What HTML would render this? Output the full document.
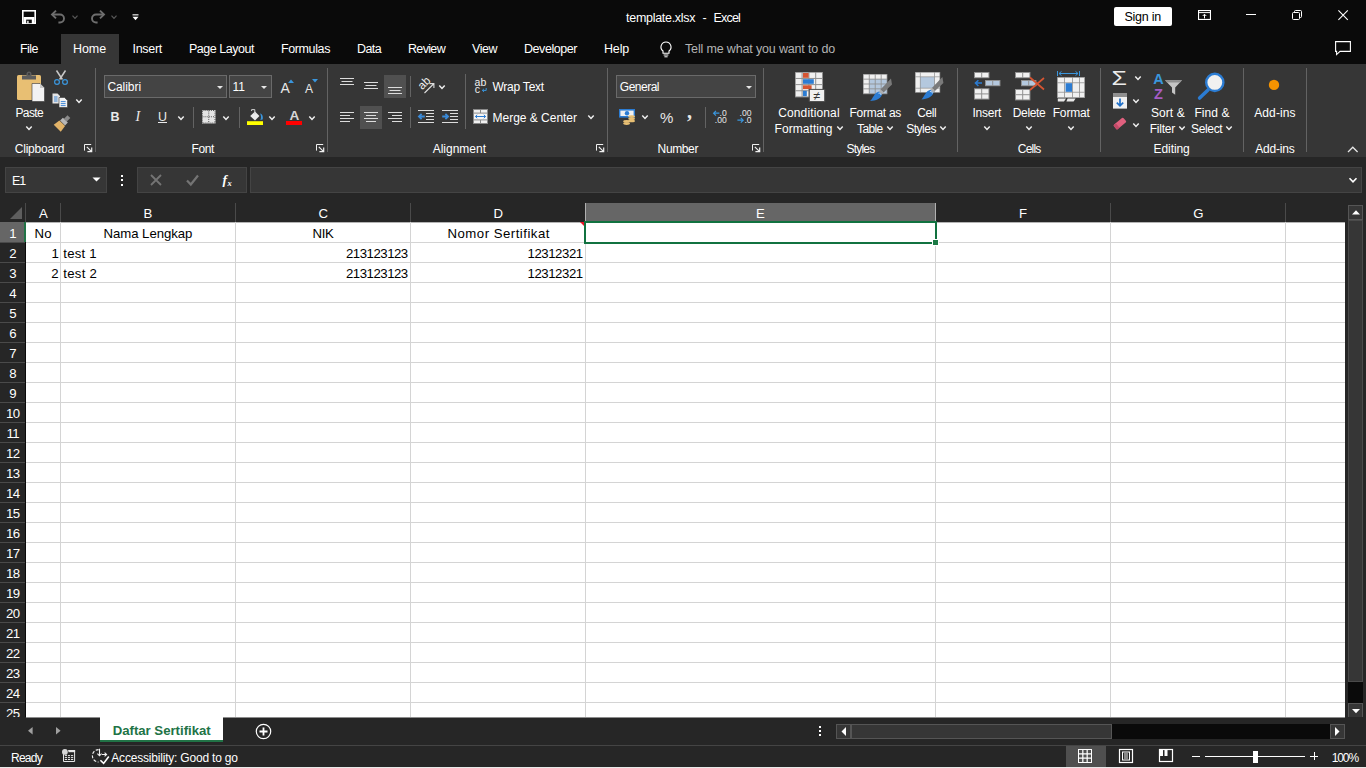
<!DOCTYPE html>
<html lang="en"><head><meta charset="utf-8"><title>template.xlsx - Excel</title>
<style>
html,body{margin:0;padding:0}
body{width:1366px;height:768px;overflow:hidden;background:#0a0a0a;position:relative;font-family:"Liberation Sans",sans-serif;color:#fff}
.b{position:absolute;display:block}
.t{position:absolute;display:block;white-space:pre;height:16px;line-height:16px;color:#fff}
svg{overflow:visible}
</style></head>
<body>
<svg class="b" style="left:22px;top:10px;" width="14" height="14" viewBox="0 0 14 14"><rect x="0.8" y="0.8" width="12.4" height="12.4" fill="none" stroke="#fff" stroke-width="1.6"/><rect x="1.5" y="7" width="11" height="6" fill="#fff"/><rect x="4.2" y="9.6" width="5.6" height="3.6" fill="#0a0a0a"/><rect x="5.2" y="10.8" width="1.4" height="2.6" fill="#fff"/></svg>
<svg class="b" style="left:50px;top:9px;" width="18" height="16" viewBox="0 0 18 16"><path d="M2.4 5.5H10A4 4 0 0 1 10 13.5H8.4" fill="none" stroke="#6e6e6e" stroke-width="1.9"/><path d="M6 1.6L2 5.5L6 9.4" fill="none" stroke="#6e6e6e" stroke-width="1.9"/></svg>
<svg class="b" style="left:70.2px;top:12.9px;" width="10" height="8" viewBox="0 0 10 8"><path d="M2.5 2.7 L5 5.3 L7.5 2.7" fill="none" stroke="#5a5a5a" stroke-width="1.2"/></svg>
<svg class="b" style="left:88px;top:9px;" width="18" height="16" viewBox="0 0 18 16"><path d="M15.6 5.5H8A4 4 0 0 0 8 13.5H9.6" fill="none" stroke="#6e6e6e" stroke-width="1.9"/><path d="M12 1.6L16 5.5L12 9.4" fill="none" stroke="#6e6e6e" stroke-width="1.9"/></svg>
<svg class="b" style="left:109.2px;top:12.9px;" width="10" height="8" viewBox="0 0 10 8"><path d="M2.5 2.7 L5 5.3 L7.5 2.7" fill="none" stroke="#5a5a5a" stroke-width="1.2"/></svg>
<svg class="b" style="left:132px;top:13.5px;" width="7" height="7" viewBox="0 0 7 7"><rect x="0.5" y="0.3" width="6" height="1.1" fill="#fff"/><path d="M0.5 2.8H6.5L3.5 6.2Z" fill="#fff"/></svg>
<span class="t " style="left:626.10px;top:10.14px;font-size:12.5px;letter-spacing:-0.296px;">template.xlsx</span>
<span class="t " style="left:702.50px;top:10.14px;font-size:12.5px;">-</span>
<span class="t " style="left:713.50px;top:10.14px;font-size:12.5px;letter-spacing:-0.813px;">Excel</span>
<div class="b " style="left:1114px;top:7px;width:58px;height:19px;background:#fff;border-radius:2px;"></div>
<span class="t " style="left:1124.50px;top:9.14px;font-size:12.5px;letter-spacing:-0.246px;color:#000;">Sign in</span>
<svg class="b" style="left:1198px;top:10px;" width="13" height="10" viewBox="0 0 13 10"><rect x="0.55" y="0.55" width="11.9" height="8.9" fill="none" stroke="#fff" stroke-width="1.1"/><path d="M0.6 2.6H12.4" stroke="#fff" stroke-width="1"/><path d="M6.5 8.4V4.4M4.7 6L6.5 4.2L8.3 6" fill="none" stroke="#fff" stroke-width="1"/></svg>
<div class="b " style="left:1246px;top:14px;width:10px;height:1px;background:#fff;"></div>
<svg class="b" style="left:1291.5px;top:10px;" width="10" height="10" viewBox="0 0 10 10"><rect x="0.5" y="2.5" width="7" height="7" fill="none" stroke="#fff" stroke-width="1" rx="1"/><path d="M2.5 2.5V1.5A1 1 0 0 1 3.5 0.5H8.5A1 1 0 0 1 9.5 1.5V6.5A1 1 0 0 1 8.5 7.5H7.5" fill="none" stroke="#fff" stroke-width="1"/></svg>
<svg class="b" style="left:1338px;top:10px;" width="10" height="10" viewBox="0 0 10 10"><path d="M0.4 0.4L9.8 9.8M9.8 0.4L0.4 9.8" stroke="#fff" stroke-width="1.1"/></svg>
<div class="b " style="left:61px;top:34px;width:58px;height:30px;background:#363636;"></div>
<span class="t " style="left:20.00px;top:40.94px;font-size:12.5px;letter-spacing:-0.536px;">File</span>
<span class="t " style="left:73.00px;top:40.94px;font-size:12.5px;letter-spacing:-0.086px;">Home</span>
<span class="t " style="left:132.50px;top:40.94px;font-size:12.5px;letter-spacing:-0.294px;">Insert</span>
<span class="t " style="left:189.00px;top:40.94px;font-size:12.5px;letter-spacing:-0.473px;">Page Layout</span>
<span class="t " style="left:281.00px;top:40.94px;font-size:12.5px;letter-spacing:-0.387px;">Formulas</span>
<span class="t " style="left:357.00px;top:40.94px;font-size:12.5px;letter-spacing:-0.601px;">Data</span>
<span class="t " style="left:408.00px;top:40.94px;font-size:12.5px;letter-spacing:-0.664px;">Review</span>
<span class="t " style="left:472.00px;top:40.94px;font-size:12.5px;letter-spacing:-0.467px;">View</span>
<span class="t " style="left:524.00px;top:40.94px;font-size:12.5px;letter-spacing:-0.442px;">Developer</span>
<span class="t " style="left:604.00px;top:40.94px;font-size:12.5px;letter-spacing:-0.177px;">Help</span>
<svg class="b" style="left:658.6px;top:41px;" width="14" height="17" viewBox="0 0 14 17"><path d="M7 1A5 5 0 0 0 4 10V12.2H10V10A5 5 0 0 0 7 1Z" fill="none" stroke="#fff" stroke-width="1.1"/><path d="M4.6 14H9.4M5.4 15.8H8.6" stroke="#fff" stroke-width="1"/></svg>
<span class="t " style="left:685.00px;top:40.94px;font-size:12.5px;letter-spacing:-0.157px;color:#b4b4b4;">Tell me what you want to do</span>
<svg class="b" style="left:1335.2px;top:41.2px;" width="16" height="15" viewBox="0 0 16 15"><path d="M0.6 0.6H15.4V10.4H5L1.6 13.6V10.4H0.6Z" fill="none" stroke="#fff" stroke-width="1.1"/></svg>
<div class="b " style="left:0px;top:64px;width:1366px;height:93px;background:#363636;"></div>
<svg class="b" style="left:16px;top:71px;" width="30" height="31" viewBox="0 0 30 31"><rect x="1" y="4" width="24" height="25" rx="1.6" fill="#e8bf73"/><path d="M6 8.5V4.5H10.5V3A2.5 2.5 0 0 1 15.5 3V4.5H20V8.5Z" fill="#5c5c5c"/><circle cx="13" cy="3" r="1" fill="#363636"/><path d="M16 12.5H24L28.5 17V30.5H16Z" fill="#f2f2f2" stroke="#363636" stroke-width="0.6"/><path d="M24 12.5V17H28.5Z" fill="#c8c8c8"/></svg>
<span class="t " style="left:15.50px;top:105.34px;font-size:12px;letter-spacing:-0.637px;">Paste</span>
<svg class="b" style="left:23.6px;top:124.4px;" width="10" height="8" viewBox="0 0 10 8"><path d="M2.3 2.6 L5 5.4 L7.7 2.6" fill="none" stroke="#f0f0f0" stroke-width="1.5"/></svg>
<svg class="b" style="left:53px;top:70px;" width="16" height="16" viewBox="0 0 16 16"><path d="M3.5 0.5L9.4 9.5M12.5 0.5L6.6 9.5" stroke="#c8c8c8" stroke-width="1.5" fill="none"/><circle cx="4" cy="12" r="2.4" fill="none" stroke="#3a96dd" stroke-width="1.2"/><circle cx="12" cy="12" r="2.4" fill="none" stroke="#3a96dd" stroke-width="1.2"/></svg>
<svg class="b" style="left:52px;top:93px;" width="17" height="15" viewBox="0 0 17 15"><path d="M0.5 0.5H5.5L8 3V10.5H0.5Z" fill="#e4e4e4"/><path d="M2 4H5.5M2 6H5.5M2 8H5.5" stroke="#2b7cd3" stroke-width="0.9"/><path d="M7 4.5H12.5L15.5 7.5V14.5H7Z" fill="#f2f2f2" stroke="#363636" stroke-width="0.6"/><path d="M8.8 8.6H13.6M8.8 10.6H13.6M8.8 12.6H13.6" stroke="#2b7cd3" stroke-width="0.9"/></svg>
<svg class="b" style="left:73.5px;top:97.4px;" width="10" height="8" viewBox="0 0 10 8"><path d="M2.3 2.6 L5 5.4 L7.7 2.6" fill="none" stroke="#f0f0f0" stroke-width="1.5"/></svg>
<svg class="b" style="left:53px;top:116px;" width="17" height="16" viewBox="0 0 17 16"><g transform="rotate(45 8.5 8)"><rect x="6.5" y="-2.5" width="4" height="5" fill="#8a8a8a"/><rect x="5" y="2.5" width="7" height="4" fill="#b8b8b8"/><path d="M4.5 7H12.5L13.5 14H3.5Z" fill="#e2b368"/></g></svg>
<span class="t " style="left:14.70px;top:140.64px;font-size:12px;letter-spacing:-0.196px;">Clipboard</span>
<svg class="b" style="left:84px;top:144px;" width="9" height="9" viewBox="0 0 9 9"><path d="M0.5 6.6V0.5H7.2" fill="none" stroke="#f0f0f0" stroke-width="1"/><path d="M2.8 2.8L7.4 7.4M7.7 3.4V7.7H3.4" fill="none" stroke="#f0f0f0" stroke-width="1.2"/></svg>
<div class="b " style="left:95px;top:68px;width:1px;height:84px;background:#636363;"></div>
<div class="b " style="left:104px;top:75px;width:123px;height:23px;background:#444;border:1px solid #6a6a6a;box-sizing:border-box;"></div>
<span class="t " style="left:107.40px;top:79.14px;font-size:12px;letter-spacing:-0.059px;">Calibri</span>
<svg class="b" style="left:216.5px;top:85.5px;" width="6" height="3" viewBox="0 0 6 3"><path d="M0 0H6L3 3Z" fill="#e6e6e6"/></svg>
<div class="b " style="left:229px;top:75px;width:43px;height:23px;background:#444;border:1px solid #6a6a6a;box-sizing:border-box;"></div>
<span class="t " style="left:232.50px;top:79.14px;font-size:12px;letter-spacing:0.021px;">11</span>
<svg class="b" style="left:261px;top:85.5px;" width="6" height="3" viewBox="0 0 6 3"><path d="M0 0H6L3 3Z" fill="#e6e6e6"/></svg>
<span class="t " style="left:280.50px;top:80.16px;font-size:14px;letter-spacing:0.162px;color:#e8e8e8;">A</span>
<svg class="b" style="left:288px;top:78.5px;" width="6" height="4" viewBox="0 0 6 4"><path d="M0 4L3 0.5L6 4Z" fill="#3a96dd"/></svg>
<span class="t " style="left:305.00px;top:81.14px;font-size:12px;letter-spacing:-0.504px;color:#e8e8e8;">A</span>
<svg class="b" style="left:311.5px;top:79px;" width="6" height="4" viewBox="0 0 6 4"><path d="M0 0L3 3.5L6 0Z" fill="#3a96dd"/></svg>
<span class="t " style="left:110.60px;top:109.14px;font-size:12.5px;letter-spacing:-1.627px;color:#eaeaea;font-weight:700;">B</span>
<span class="t " style="left:135.50px;top:109.14px;font-size:12.5px;color:#eaeaea;font-style:italic;font-family:'Liberation Serif',serif;font-size:14px;">I</span>
<span class="t " style="left:158.00px;top:108.64px;font-size:12.5px;letter-spacing:-0.027px;color:#eaeaea;">U</span>
<div class="b " style="left:158px;top:122px;width:9px;height:1px;background:#eaeaea;"></div>
<svg class="b" style="left:175.6px;top:113.6px;" width="10" height="8" viewBox="0 0 10 8"><path d="M2.3 2.6 L5 5.4 L7.7 2.6" fill="none" stroke="#f0f0f0" stroke-width="1.5"/></svg>
<div class="b " style="left:193px;top:107px;width:1px;height:21px;background:#636363;"></div>
<svg class="b" style="left:201.5px;top:109.5px;" width="14" height="14" viewBox="0 0 14 14"><rect x="0" y="0" width="13.5" height="13.5" fill="#e4e4e4"/><path d="M0.5 0.5H13V13H0.5ZM6.75 0.5V13M0.5 6.75H13" fill="none" stroke="#555" stroke-width="1" stroke-dasharray="1 1.1"/></svg>
<svg class="b" style="left:221.2px;top:113.6px;" width="10" height="8" viewBox="0 0 10 8"><path d="M2.3 2.6 L5 5.4 L7.7 2.6" fill="none" stroke="#f0f0f0" stroke-width="1.5"/></svg>
<div class="b " style="left:239px;top:107px;width:1px;height:21px;background:#636363;"></div>
<svg class="b" style="left:247px;top:108px;" width="17" height="18" viewBox="0 0 17 18"><path d="M8 3.6L12.4 8L8 12.4L3.2 8Z" fill="#ececec"/><path d="M7.8 6.2V1.6H4.6V3" fill="none" stroke="#d0d0d0" stroke-width="1"/><path d="M13 5.4C15.6 6 16.4 9 15.6 11.6L13.4 12C14.4 9.6 14.2 7.6 13 5.4Z" fill="#3a96dd"/><rect x="0" y="13.2" width="16" height="3.8" fill="#ffff00"/></svg>
<svg class="b" style="left:267.2px;top:113.6px;" width="10" height="8" viewBox="0 0 10 8"><path d="M2.3 2.6 L5 5.4 L7.7 2.6" fill="none" stroke="#f0f0f0" stroke-width="1.5"/></svg>
<span class="t " style="left:289.60px;top:108.06px;font-size:13.6px;letter-spacing:-0.422px;color:#d8d8d8;font-weight:700;">A</span>
<div class="b " style="left:286px;top:121.2px;width:16px;height:3.8px;background:#ff0000;"></div>
<svg class="b" style="left:306.8px;top:113.6px;" width="10" height="8" viewBox="0 0 10 8"><path d="M2.3 2.6 L5 5.4 L7.7 2.6" fill="none" stroke="#f0f0f0" stroke-width="1.5"/></svg>
<span class="t " style="left:191.50px;top:140.64px;font-size:12px;letter-spacing:-0.378px;">Font</span>
<svg class="b" style="left:316px;top:144px;" width="9" height="9" viewBox="0 0 9 9"><path d="M0.5 6.6V0.5H7.2" fill="none" stroke="#f0f0f0" stroke-width="1"/><path d="M2.8 2.8L7.4 7.4M7.7 3.4V7.7H3.4" fill="none" stroke="#f0f0f0" stroke-width="1.2"/></svg>
<div class="b " style="left:327px;top:68px;width:1px;height:84px;background:#636363;"></div>
<svg class="b" style="left:340px;top:78px;" width="16" height="14" viewBox="0 0 16 14"><rect x="0" y="0" width="14" height="1" fill="#dcdcdc"/><rect x="1.5" y="3" width="11" height="1" fill="#dcdcdc"/><rect x="0" y="6" width="14" height="1" fill="#dcdcdc"/></svg>
<svg class="b" style="left:364px;top:82px;" width="16" height="14" viewBox="0 0 16 14"><rect x="0" y="0" width="14" height="1" fill="#dcdcdc"/><rect x="1.5" y="3" width="11" height="1" fill="#dcdcdc"/><rect x="0" y="6" width="14" height="1" fill="#dcdcdc"/></svg>
<div class="b " style="left:384px;top:75px;width:22px;height:23px;background:#505050;"></div>
<svg class="b" style="left:388px;top:87px;" width="16" height="14" viewBox="0 0 16 14"><rect x="0" y="0" width="14" height="1" fill="#dcdcdc"/><rect x="1.5" y="3" width="11" height="1" fill="#dcdcdc"/><rect x="0" y="6" width="14" height="1" fill="#dcdcdc"/></svg>
<div class="b " style="left:410px;top:76px;width:1px;height:21px;background:#636363;"></div>
<svg class="b" style="left:417px;top:76px;" width="19" height="19" viewBox="0 0 19 19"><text x="2" y="11.5" font-family="Liberation Sans, sans-serif" font-size="11.5" fill="#f0f0f0" transform="rotate(-45 7 9)">ab</text><path d="M7.5 17L16.5 8M12.5 7.6H16.9V12" fill="none" stroke="#dcdcdc" stroke-width="1.1"/></svg>
<svg class="b" style="left:436.6px;top:82.6px;" width="10" height="8" viewBox="0 0 10 8"><path d="M2.3 2.6 L5 5.4 L7.7 2.6" fill="none" stroke="#f0f0f0" stroke-width="1.5"/></svg>
<div class="b " style="left:465px;top:74px;width:1px;height:55px;background:#636363;"></div>
<svg class="b" style="left:340px;top:112px;" width="16" height="14" viewBox="0 0 16 14"><rect x="0" y="0" width="14" height="1" fill="#dcdcdc"/><rect x="0" y="3" width="10" height="1" fill="#dcdcdc"/><rect x="0" y="6" width="14" height="1" fill="#dcdcdc"/><rect x="0" y="9" width="10" height="1" fill="#dcdcdc"/></svg>
<div class="b " style="left:360px;top:106px;width:22px;height:23px;background:#505050;"></div>
<svg class="b" style="left:364px;top:112px;" width="16" height="14" viewBox="0 0 16 14"><rect x="0" y="0" width="14" height="1" fill="#dcdcdc"/><rect x="2" y="3" width="10" height="1" fill="#dcdcdc"/><rect x="0" y="6" width="14" height="1" fill="#dcdcdc"/><rect x="2" y="9" width="10" height="1" fill="#dcdcdc"/></svg>
<svg class="b" style="left:388px;top:112px;" width="16" height="14" viewBox="0 0 16 14"><rect x="0" y="0" width="14" height="1" fill="#dcdcdc"/><rect x="4" y="3" width="10" height="1" fill="#dcdcdc"/><rect x="0" y="6" width="14" height="1" fill="#dcdcdc"/><rect x="4" y="9" width="10" height="1" fill="#dcdcdc"/></svg>
<div class="b " style="left:410px;top:107px;width:1px;height:21px;background:#636363;"></div>
<svg class="b" style="left:418px;top:110px;" width="17" height="14" viewBox="0 0 17 14"><rect x="0" y="0" width="16" height="1" fill="#dcdcdc"/><rect x="8" y="3" width="8" height="1" fill="#dcdcdc"/><rect x="8" y="6" width="8" height="1" fill="#dcdcdc"/><rect x="8" y="9" width="8" height="1" fill="#dcdcdc"/><rect x="0" y="12" width="16" height="1" fill="#dcdcdc"/><path d="M6.8 6.5H1M3.6 3.8L0.9 6.5L3.6 9.2" fill="none" stroke="#3a8ad8" stroke-width="1.8"/></svg>
<svg class="b" style="left:442px;top:110px;" width="17" height="14" viewBox="0 0 17 14"><rect x="0" y="0" width="16" height="1" fill="#dcdcdc"/><rect x="8" y="3" width="8" height="1" fill="#dcdcdc"/><rect x="8" y="6" width="8" height="1" fill="#dcdcdc"/><rect x="8" y="9" width="8" height="1" fill="#dcdcdc"/><rect x="0" y="12" width="16" height="1" fill="#dcdcdc"/><path d="M0.2 6.5H6M3.4 3.8L6.1 6.5L3.4 9.2" fill="none" stroke="#3a8ad8" stroke-width="1.8"/></svg>
<svg class="b" style="left:474px;top:77px;" width="14" height="17" viewBox="0 0 14 17"><text x="0.6" y="8.6" font-family="Liberation Sans, sans-serif" font-size="10.5" fill="#f0f0f0">ab</text><text x="0.8" y="16" font-family="Liberation Sans, sans-serif" font-size="10.5" fill="#f0f0f0">c</text><path d="M12.2 11V13.4H8.4M9.9 11.9L8.3 13.4L9.9 14.9" fill="none" stroke="#3a96dd" stroke-width="1"/></svg>
<span class="t " style="left:492.40px;top:79.24px;font-size:12px;letter-spacing:-0.220px;">Wrap Text</span>
<svg class="b" style="left:473px;top:109px;" width="15" height="15" viewBox="0 0 15 15"><rect x="0" y="0" width="15" height="15" fill="#8a8a8a"/><rect x="1" y="1" width="6" height="2.6" fill="#f0f0f0"/><rect x="8" y="1" width="6" height="2.6" fill="#f0f0f0"/><rect x="1" y="4.6" width="13" height="5.8" fill="#f4f4f4"/><rect x="1" y="11.4" width="6" height="2.6" fill="#f0f0f0"/><rect x="8" y="11.4" width="6" height="2.6" fill="#f0f0f0"/><path d="M2.4 7.5H12.6M4.2 5.8L2.4 7.5L4.2 9.2M10.8 5.8L12.6 7.5L10.8 9.2" fill="none" stroke="#2b7cd3" stroke-width="1"/></svg>
<span class="t " style="left:492.60px;top:110.24px;font-size:12px;letter-spacing:-0.022px;">Merge &amp; Center</span>
<svg class="b" style="left:585.7px;top:113.4px;" width="10" height="8" viewBox="0 0 10 8"><path d="M2.3 2.6 L5 5.4 L7.7 2.6" fill="none" stroke="#f0f0f0" stroke-width="1.5"/></svg>
<span class="t " style="left:432.70px;top:140.64px;font-size:12px;letter-spacing:-0.007px;">Alignment</span>
<svg class="b" style="left:596px;top:144px;" width="9" height="9" viewBox="0 0 9 9"><path d="M0.5 6.6V0.5H7.2" fill="none" stroke="#f0f0f0" stroke-width="1"/><path d="M2.8 2.8L7.4 7.4M7.7 3.4V7.7H3.4" fill="none" stroke="#f0f0f0" stroke-width="1.2"/></svg>
<div class="b " style="left:607px;top:68px;width:1px;height:84px;background:#636363;"></div>
<div class="b " style="left:616px;top:75px;width:140px;height:23px;background:#444;border:1px solid #6a6a6a;box-sizing:border-box;"></div>
<span class="t " style="left:619.80px;top:79.14px;font-size:12px;letter-spacing:-0.499px;">General</span>
<svg class="b" style="left:745.8px;top:85.5px;" width="6" height="3" viewBox="0 0 6 3"><path d="M0 0H6L3 3Z" fill="#e6e6e6"/></svg>
<svg class="b" style="left:619px;top:109px;" width="17" height="17" viewBox="0 0 17 17"><rect x="0" y="0" width="16" height="8.6" fill="#2b7cd3"/><rect x="1.4" y="1.6" width="13.2" height="5.4" fill="#f0f0f0"/><circle cx="8" cy="4.3" r="2.2" fill="#2b7cd3"/><ellipse cx="12.6" cy="7.6" rx="3.4" ry="1.3" fill="#e8bf73"/><ellipse cx="12.6" cy="9.8" rx="3.4" ry="1.3" fill="#e8bf73"/><ellipse cx="12.6" cy="12" rx="3.4" ry="1.3" fill="#e8bf73"/><ellipse cx="7.6" cy="12.4" rx="3.4" ry="1.3" fill="#e8bf73"/><ellipse cx="7.6" cy="14.6" rx="3.4" ry="1.3" fill="#e8bf73"/></svg>
<svg class="b" style="left:639.7px;top:113.4px;" width="10" height="8" viewBox="0 0 10 8"><path d="M2.3 2.6 L5 5.4 L7.7 2.6" fill="none" stroke="#f0f0f0" stroke-width="1.5"/></svg>
<span class="t " style="left:660.00px;top:110.17px;font-size:15px;letter-spacing:-0.337px;color:#e6e6e6;">%</span>
<span class="t " style="left:687.00px;top:102.53px;font-size:20px;color:#e6e6e6;font-weight:700;font-family:'Liberation Serif',serif;">,</span>
<div class="b " style="left:705px;top:107px;width:1px;height:21px;background:#636363;"></div>
<svg class="b" style="left:713px;top:110px;" width="15" height="14" viewBox="0 0 15 14"><path d="M6.4 3.2H0.8M3 0.8L0.6 3.2L3 5.6" fill="none" stroke="#3a96dd" stroke-width="1.2"/><text x="6.6" y="6.2" font-family="Liberation Sans, sans-serif" font-size="8.6" fill="#e6e6e6">.0</text><text x="1.8" y="13.2" font-family="Liberation Sans, sans-serif" font-size="8.6" fill="#e6e6e6">.00</text></svg>
<svg class="b" style="left:737px;top:110px;" width="15" height="14" viewBox="0 0 15 14"><path d="M0.4 10.2H6M3.8 7.8L6.2 10.2L3.8 12.6" fill="none" stroke="#3a96dd" stroke-width="1.2"/><text x="2.6" y="6.2" font-family="Liberation Sans, sans-serif" font-size="8.6" fill="#e6e6e6">.00</text><text x="7.4" y="13.2" font-family="Liberation Sans, sans-serif" font-size="8.6" fill="#e6e6e6">.0</text></svg>
<span class="t " style="left:657.60px;top:140.64px;font-size:12px;letter-spacing:-0.380px;">Number</span>
<svg class="b" style="left:752px;top:144px;" width="9" height="9" viewBox="0 0 9 9"><path d="M0.5 6.6V0.5H7.2" fill="none" stroke="#f0f0f0" stroke-width="1"/><path d="M2.8 2.8L7.4 7.4M7.7 3.4V7.7H3.4" fill="none" stroke="#f0f0f0" stroke-width="1.2"/></svg>
<div class="b " style="left:763px;top:68px;width:1px;height:84px;background:#636363;"></div>
<svg class="b" style="left:795px;top:71.6px;" width="31" height="31" viewBox="0 0 31 31"><rect x="0" y="0" width="28" height="25.4" fill="#8f8f8f"/><rect x="0.80" y="0.80" width="5.8" height="5.15" fill="#f0f0f0"/><rect x="7.60" y="0.80" width="5.8" height="5.15" fill="#f0f0f0"/><rect x="14.40" y="0.80" width="5.8" height="5.15" fill="#f0f0f0"/><rect x="21.20" y="0.80" width="5.8" height="5.15" fill="#f0f0f0"/><rect x="0.80" y="6.95" width="5.8" height="5.15" fill="#f0f0f0"/><rect x="7.60" y="6.95" width="5.8" height="5.15" fill="#f0f0f0"/><rect x="14.40" y="6.95" width="5.8" height="5.15" fill="#f0f0f0"/><rect x="21.20" y="6.95" width="5.8" height="5.15" fill="#f0f0f0"/><rect x="0.80" y="13.10" width="5.8" height="5.15" fill="#f0f0f0"/><rect x="7.60" y="13.10" width="5.8" height="5.15" fill="#f0f0f0"/><rect x="14.40" y="13.10" width="5.8" height="5.15" fill="#f0f0f0"/><rect x="21.20" y="13.10" width="5.8" height="5.15" fill="#f0f0f0"/><rect x="0.80" y="19.25" width="5.8" height="5.15" fill="#f0f0f0"/><rect x="7.60" y="19.25" width="5.8" height="5.15" fill="#f0f0f0"/><rect x="14.40" y="19.25" width="5.8" height="5.15" fill="#f0f0f0"/><rect x="21.20" y="19.25" width="5.8" height="5.15" fill="#f0f0f0"/><rect x="8" y="1" width="5.6" height="4.8" fill="#d65532"/><rect x="8" y="7.2" width="10.8" height="4.6" fill="#2b7cd3"/><rect x="8" y="13.3" width="8.6" height="3.8" fill="#d65532"/><rect x="8" y="18.8" width="3.8" height="5.4" fill="#2b7cd3"/><rect x="14.3" y="17.4" width="15.4" height="12.2" fill="#f0f0f0" stroke="#4a4a4a" stroke-width="1"/><text x="22" y="27.6" text-anchor="middle" font-family="Liberation Sans, sans-serif" font-size="12.5" fill="#333">≠</text></svg>
<span class="t " style="left:778.20px;top:105.34px;font-size:12px;letter-spacing:0.132px;">Conditional</span>
<span class="t " style="left:774.60px;top:121.34px;font-size:12px;letter-spacing:0.055px;">Formatting</span>
<svg class="b" style="left:834.8px;top:124.4px;" width="10" height="8" viewBox="0 0 10 8"><path d="M2.3 2.6 L5 5.4 L7.7 2.6" fill="none" stroke="#f0f0f0" stroke-width="1.5"/></svg>
<svg class="b" style="left:862.5px;top:74.4px;" width="30" height="28" viewBox="0 0 30 28"><rect x="0" y="0" width="24.4" height="20.2" fill="#8f8f8f"/><rect x="0.70" y="0.70" width="5.1" height="4.0" fill="#f0f0f0"/><rect x="6.66" y="0.70" width="5.1" height="4.0" fill="#f0f0f0"/><rect x="12.62" y="0.70" width="5.1" height="4.0" fill="#f0f0f0"/><rect x="18.58" y="0.70" width="5.1" height="4.0" fill="#f0f0f0"/><rect x="0.70" y="5.56" width="5.1" height="4.0" fill="#f0f0f0"/><rect x="0.70" y="10.42" width="5.1" height="4.0" fill="#f0f0f0"/><rect x="0.70" y="15.28" width="5.1" height="4.0" fill="#f0f0f0"/><rect x="6.66" y="5.56" width="5.1" height="4.0" fill="#b4c8de"/><rect x="12.62" y="5.56" width="5.1" height="4.0" fill="#b4c8de"/><rect x="18.58" y="5.56" width="5.1" height="4.0" fill="#b4c8de"/><rect x="6.66" y="10.42" width="5.1" height="4.0" fill="#b4c8de"/><rect x="12.62" y="10.42" width="5.1" height="4.0" fill="#b4c8de"/><rect x="18.58" y="10.42" width="5.1" height="4.0" fill="#b4c8de"/><rect x="6.66" y="15.28" width="5.1" height="4.0" fill="#b4c8de"/><rect x="12.62" y="15.28" width="5.1" height="4.0" fill="#b4c8de"/><rect x="18.58" y="15.28" width="5.1" height="4.0" fill="#b4c8de"/><g transform="translate(7 4.6)"><path d="M21 0L22 6L13.5 14L10.5 11Z" fill="#7a7a7a"/><path d="M10.5 11L13.5 14L12 15.8L9 12.8Z" fill="#b0b0b0"/><path d="M9 12.8L12 15.8C11 20 6 22 0 22.4C3.5 19.5 4 14 9 12.8Z" fill="#2b7cd3"/><path d="M8.5 14.6C10 14.2 11 15 11 16.4" fill="none" stroke="#cfe3f7" stroke-width="1"/></g></svg>
<span class="t " style="left:849.50px;top:105.34px;font-size:12px;letter-spacing:-0.279px;">Format as</span>
<span class="t " style="left:857.00px;top:121.34px;font-size:12px;letter-spacing:-0.618px;">Table</span>
<svg class="b" style="left:884.7px;top:124.4px;" width="10" height="8" viewBox="0 0 10 8"><path d="M2.3 2.6 L5 5.4 L7.7 2.6" fill="none" stroke="#f0f0f0" stroke-width="1.5"/></svg>
<svg class="b" style="left:914.5px;top:72.2px;" width="30" height="29" viewBox="0 0 30 29"><rect x="0" y="0" width="25.2" height="20.8" fill="#8f8f8f"/><rect x="0.70" y="0.70" width="4.2" height="3.8" fill="#f0f0f0"/><rect x="5.6" y="0.7" width="13.6" height="3.8" fill="#f0f0f0"/><rect x="19.9" y="0.7" width="4.6" height="3.8" fill="#f0f0f0"/><rect x="0.7" y="5.2" width="4.2" height="10.6" fill="#f0f0f0"/><rect x="5.6" y="5.2" width="13.6" height="10.6" fill="#b4c8de"/><rect x="19.9" y="5.2" width="4.6" height="10.6" fill="#f0f0f0"/><rect x="0.7" y="16.5" width="4.2" height="3.6" fill="#f0f0f0"/><rect x="5.6" y="16.5" width="13.6" height="3.6" fill="#f0f0f0"/><rect x="19.9" y="16.5" width="4.6" height="3.6" fill="#f0f0f0"/><g transform="translate(6.4 5)"><path d="M21 0L22 6L13.5 14L10.5 11Z" fill="#7a7a7a"/><path d="M10.5 11L13.5 14L12 15.8L9 12.8Z" fill="#b0b0b0"/><path d="M9 12.8L12 15.8C11 20 6 22 0 22.4C3.5 19.5 4 14 9 12.8Z" fill="#2b7cd3"/><path d="M8.5 14.6C10 14.2 11 15 11 16.4" fill="none" stroke="#cfe3f7" stroke-width="1"/></g></svg>
<span class="t " style="left:917.30px;top:105.34px;font-size:12px;letter-spacing:-0.393px;">Cell</span>
<span class="t " style="left:906.20px;top:121.34px;font-size:12px;letter-spacing:-0.480px;">Styles</span>
<svg class="b" style="left:937.9px;top:124.4px;" width="10" height="8" viewBox="0 0 10 8"><path d="M2.3 2.6 L5 5.4 L7.7 2.6" fill="none" stroke="#f0f0f0" stroke-width="1.5"/></svg>
<span class="t " style="left:846.40px;top:140.64px;font-size:12px;letter-spacing:-0.763px;">Styles</span>
<div class="b " style="left:957px;top:68px;width:1px;height:84px;background:#636363;"></div>
<svg class="b" style="left:974px;top:72px;" width="28" height="28" viewBox="0 0 28 28"><rect x="0" y="0" width="15.40" height="6.20" fill="#8f8f8f"/><rect x="1.00" y="1.00" width="6.2" height="4.2" fill="#f0f0f0"/><rect x="8.20" y="1.00" width="6.2" height="4.2" fill="#f0f0f0"/><rect x="11" y="8" width="15.40" height="6.20" fill="#8f8f8f"/><rect x="12.00" y="9.00" width="6.2" height="4.2" fill="#b4c8de"/><rect x="19.20" y="9.00" width="6.2" height="4.2" fill="#b4c8de"/><rect x="0" y="16.2" width="15.40" height="11.40" fill="#8f8f8f"/><rect x="1.00" y="17.20" width="6.2" height="4.2" fill="#f0f0f0"/><rect x="8.20" y="17.20" width="6.2" height="4.2" fill="#f0f0f0"/><rect x="1.00" y="22.40" width="6.2" height="4.2" fill="#f0f0f0"/><rect x="8.20" y="22.40" width="6.2" height="4.2" fill="#f0f0f0"/><path d="M8 11.1H1.6M4.4 8.2L1.4 11.1L4.4 14" fill="none" stroke="#2b7cd3" stroke-width="1.5"/></svg>
<span class="t " style="left:972.40px;top:105.34px;font-size:12px;letter-spacing:-0.235px;">Insert</span>
<svg class="b" style="left:981.9px;top:124.4px;" width="10" height="8" viewBox="0 0 10 8"><path d="M2.3 2.6 L5 5.4 L7.7 2.6" fill="none" stroke="#f0f0f0" stroke-width="1.5"/></svg>
<svg class="b" style="left:1015px;top:72px;" width="30" height="29" viewBox="0 0 30 29"><rect x="0" y="0" width="15.40" height="6.20" fill="#8f8f8f"/><rect x="1.00" y="1.00" width="6.2" height="4.2" fill="#f0f0f0"/><rect x="8.20" y="1.00" width="6.2" height="4.2" fill="#f0f0f0"/><rect x="6" y="8" width="15.40" height="6.20" fill="#8f8f8f"/><rect x="7.00" y="9.00" width="6.2" height="4.2" fill="#b4c8de"/><rect x="14.20" y="9.00" width="6.2" height="4.2" fill="#b4c8de"/><rect x="0" y="17" width="15.40" height="11.40" fill="#8f8f8f"/><rect x="1.00" y="18.00" width="6.2" height="4.2" fill="#f0f0f0"/><rect x="8.20" y="18.00" width="6.2" height="4.2" fill="#f0f0f0"/><rect x="1.00" y="23.20" width="6.2" height="4.2" fill="#f0f0f0"/><rect x="8.20" y="23.20" width="6.2" height="4.2" fill="#f0f0f0"/><path d="M15 5.5L29 17.5M29 6L15 18" stroke="#d65532" stroke-width="1.7" fill="none"/></svg>
<span class="t " style="left:1012.80px;top:105.34px;font-size:12px;letter-spacing:-0.365px;">Delete</span>
<svg class="b" style="left:1023.6px;top:124.4px;" width="10" height="8" viewBox="0 0 10 8"><path d="M2.3 2.6 L5 5.4 L7.7 2.6" fill="none" stroke="#f0f0f0" stroke-width="1.5"/></svg>
<svg class="b" style="left:1057px;top:70.6px;" width="29" height="31" viewBox="0 0 29 31"><path d="M0.5 0V5M22.5 0V5M2 2.5H21M4.5 0.4L2 2.5L4.5 4.6M18.5 0.4L21 2.5L18.5 4.6" fill="none" stroke="#3a96dd" stroke-width="1"/><rect x="0" y="6" width="28" height="21" fill="#8f8f8f"/><rect x="0.8" y="6.8" width="6.2" height="4.6" fill="#f0f0f0"/><rect x="0.8" y="12.2" width="6.2" height="8.6" fill="#f0f0f0"/><rect x="0.8" y="21.6" width="6.2" height="4.6" fill="#f0f0f0"/><rect x="7.8" y="6.8" width="7.4" height="4.6" fill="#f0f0f0"/><rect x="7.8" y="12.2" width="7.4" height="8.6" fill="#f0f0f0"/><rect x="7.8" y="21.6" width="7.4" height="4.6" fill="#f0f0f0"/><rect x="16" y="6.8" width="6" height="4.6" fill="#f0f0f0"/><rect x="16" y="12.2" width="6" height="8.6" fill="#f0f0f0"/><rect x="16" y="21.6" width="6" height="4.6" fill="#f0f0f0"/><rect x="22.8" y="6.8" width="4.4" height="4.6" fill="#f0f0f0"/><rect x="22.8" y="12.2" width="4.4" height="8.6" fill="#f0f0f0"/><rect x="22.8" y="21.6" width="4.4" height="4.6" fill="#f0f0f0"/><rect x="8.6" y="12.2" width="6.4" height="8.6" fill="#2b7cd3"/><path d="M0.8 27.6H9L7 30.4H0.8Z M10.6 27.6H18.6L16.6 30.4H9.4Z" fill="#e8e8e8"/></svg>
<span class="t " style="left:1052.70px;top:105.34px;font-size:12px;letter-spacing:-0.151px;">Format</span>
<svg class="b" style="left:1065.7px;top:124.4px;" width="10" height="8" viewBox="0 0 10 8"><path d="M2.3 2.6 L5 5.4 L7.7 2.6" fill="none" stroke="#f0f0f0" stroke-width="1.5"/></svg>
<span class="t " style="left:1017.80px;top:140.64px;font-size:12px;letter-spacing:-0.775px;">Cells</span>
<div class="b " style="left:1100px;top:68px;width:1px;height:84px;background:#636363;"></div>
<svg class="b" style="left:1112px;top:69.6px;" width="16" height="16" viewBox="0 0 16 16"><text x="-0.4" y="14.6" font-family="Liberation Sans, sans-serif" font-size="21" fill="#ececec" textLength="15.4" lengthAdjust="spacingAndGlyphs">Σ</text></svg>
<svg class="b" style="left:1132.6px;top:74.3px;" width="10" height="8" viewBox="0 0 10 8"><path d="M2.3 2.6 L5 5.4 L7.7 2.6" fill="none" stroke="#f0f0f0" stroke-width="1.5"/></svg>
<svg class="b" style="left:1113px;top:93px;" width="15" height="16" viewBox="0 0 15 16"><rect x="0" y="0" width="14" height="15.6" fill="#f0f0f0"/><rect x="0" y="0" width="14" height="4" fill="#8f8f8f"/><path d="M7 5.6V12.6M3.8 9.6L7 12.8L10.2 9.6" fill="none" stroke="#1e6fc8" stroke-width="1.7"/></svg>
<svg class="b" style="left:1130.6px;top:97.1px;" width="10" height="8" viewBox="0 0 10 8"><path d="M2.3 2.6 L5 5.4 L7.7 2.6" fill="none" stroke="#f0f0f0" stroke-width="1.5"/></svg>
<svg class="b" style="left:1112px;top:116px;" width="16" height="15" viewBox="0 0 16 15"><g transform="rotate(-40 8 7.5)"><rect x="1.6" y="4.6" width="12.6" height="5.8" rx="1.2" fill="#e0607e"/><rect x="1.6" y="4.6" width="3.4" height="5.8" rx="1" fill="#c24a68"/></g></svg>
<svg class="b" style="left:1130.6px;top:120.5px;" width="10" height="8" viewBox="0 0 10 8"><path d="M2.3 2.6 L5 5.4 L7.7 2.6" fill="none" stroke="#f0f0f0" stroke-width="1.5"/></svg>
<svg class="b" style="left:1152px;top:72px;" width="31" height="28" viewBox="0 0 31 28"><text x="1.2" y="12.4" font-family="Liberation Sans, sans-serif" font-size="14.5" font-weight="700" fill="#3a96dd">A</text><text x="2" y="27" font-family="Liberation Sans, sans-serif" font-size="14.5" font-weight="700" fill="#a45cc4">Z</text><path d="M13 8.2H30L23.2 15.4V22.8L20 20.6V15.4Z" fill="#c4c4c4"/><path d="M13 8.2H30L28 10.4H15Z" fill="#8f8f8f"/></svg>
<span class="t " style="left:1151.00px;top:105.34px;font-size:12px;letter-spacing:0.059px;">Sort &amp;</span>
<span class="t " style="left:1149.70px;top:121.34px;font-size:12px;letter-spacing:-0.228px;">Filter</span>
<svg class="b" style="left:1176.6px;top:124.4px;" width="10" height="8" viewBox="0 0 10 8"><path d="M2.3 2.6 L5 5.4 L7.7 2.6" fill="none" stroke="#f0f0f0" stroke-width="1.5"/></svg>
<svg class="b" style="left:1197px;top:71px;" width="29" height="29" viewBox="0 0 29 29"><path d="M11 19L2.6 27" stroke="#2b7cd3" stroke-width="3.6" stroke-linecap="round"/><circle cx="17.8" cy="11.4" r="8.6" fill="#f0f0f0" stroke="#2b7cd3" stroke-width="2.4"/></svg>
<span class="t " style="left:1194.40px;top:105.34px;font-size:12px;letter-spacing:0.070px;">Find &amp;</span>
<span class="t " style="left:1191.10px;top:121.34px;font-size:12px;letter-spacing:-0.359px;">Select</span>
<svg class="b" style="left:1223.7px;top:124.4px;" width="10" height="8" viewBox="0 0 10 8"><path d="M2.3 2.6 L5 5.4 L7.7 2.6" fill="none" stroke="#f0f0f0" stroke-width="1.5"/></svg>
<span class="t " style="left:1153.60px;top:140.64px;font-size:12px;letter-spacing:-0.099px;">Editing</span>
<div class="b " style="left:1243px;top:68px;width:1px;height:84px;background:#636363;"></div>
<svg class="b" style="left:1268px;top:79px;" width="12" height="12" viewBox="0 0 12 12"><circle cx="6" cy="5.9" r="5.2" fill="#f59300"/></svg>
<span class="t " style="left:1254.20px;top:105.34px;font-size:12px;letter-spacing:0.116px;">Add-ins</span>
<span class="t " style="left:1255.20px;top:140.64px;font-size:12px;letter-spacing:-0.170px;">Add-ins</span>
<div class="b " style="left:1306px;top:68px;width:1px;height:84px;background:#636363;"></div>
<svg class="b" style="left:1347px;top:146px;" width="12" height="7" viewBox="0 0 12 7"><path d="M1 6L5.8 1.2L10.6 6" fill="none" stroke="#e6e6e6" stroke-width="1.3"/></svg>
<div class="b " style="left:0px;top:157px;width:1366px;height:46px;background:#262626;"></div>
<div class="b " style="left:5px;top:167px;width:102px;height:26px;background:#363636;border:1px solid #444;box-sizing:border-box;"></div>
<span class="t " style="left:12.00px;top:172.64px;font-size:12.5px;letter-spacing:-1.145px;">E1</span>
<svg class="b" style="left:92px;top:177px;" width="9" height="5" viewBox="0 0 9 5"><path d="M0.5 0.5H8.5L4.5 4.5Z" fill="#fff"/></svg>
<div class="b " style="left:121px;top:174.5px;width:2px;height:2px;background:#fff;"></div>
<div class="b " style="left:121px;top:179px;width:2px;height:2px;background:#fff;"></div>
<div class="b " style="left:121px;top:183.5px;width:2px;height:2px;background:#fff;"></div>
<div class="b " style="left:137px;top:167px;width:110px;height:26px;background:#363636;border:1px solid #444;box-sizing:border-box;"></div>
<svg class="b" style="left:150px;top:174px;" width="12" height="12" viewBox="0 0 12 12"><path d="M1 1L11 11M11 1L1 11" stroke="#747474" stroke-width="1.8"/></svg>
<svg class="b" style="left:186px;top:174px;" width="13" height="12" viewBox="0 0 13 12"><path d="M1 6.5L4.8 10.5L12 1.5" fill="none" stroke="#747474" stroke-width="2.2"/></svg>
<span class="t " style="left:222.50px;top:172.16px;font-size:13.5px;font-weight:700;font-style:italic;font-family:'Liberation Serif',serif;">f</span>
<span class="t " style="left:227.50px;top:174.60px;font-size:8.5px;font-weight:700;font-style:italic;font-family:'Liberation Serif',serif;">x</span>
<div class="b " style="left:250px;top:167px;width:1112px;height:26px;background:#363636;border:1px solid #444;box-sizing:border-box;"></div>
<svg class="b" style="left:1347.7px;top:176.4px;" width="10" height="8" viewBox="0 0 10 8"><path d="M1.5 2.25 L5 5.75 L8.5 2.25" fill="none" stroke="#fff" stroke-width="1.6"/></svg>
<div class="b " style="left:0px;top:203px;width:1366px;height:19px;background:#262626;"></div>
<div class="b " style="left:26px;top:222px;width:1319px;height:495px;background:#fff;"></div>
<div class="b " style="left:0px;top:222px;width:25px;height:495px;background:#262626;"></div>
<div class="b " style="left:1345px;top:203px;width:21px;height:515px;background:#262626;"></div>
<div class="b " style="left:26px;top:222px;width:1319px;height:1px;background:#b4b4b4;"></div>
<div class="b" style="left:26px;top:242px;width:1319px;height:1px;background:#d4d4d4"></div><div class="b" style="left:26px;top:262px;width:1319px;height:1px;background:#d4d4d4"></div><div class="b" style="left:26px;top:282px;width:1319px;height:1px;background:#d4d4d4"></div><div class="b" style="left:26px;top:302px;width:1319px;height:1px;background:#d4d4d4"></div><div class="b" style="left:26px;top:322px;width:1319px;height:1px;background:#d4d4d4"></div><div class="b" style="left:26px;top:342px;width:1319px;height:1px;background:#d4d4d4"></div><div class="b" style="left:26px;top:362px;width:1319px;height:1px;background:#d4d4d4"></div><div class="b" style="left:26px;top:382px;width:1319px;height:1px;background:#d4d4d4"></div><div class="b" style="left:26px;top:402px;width:1319px;height:1px;background:#d4d4d4"></div><div class="b" style="left:26px;top:422px;width:1319px;height:1px;background:#d4d4d4"></div><div class="b" style="left:26px;top:442px;width:1319px;height:1px;background:#d4d4d4"></div><div class="b" style="left:26px;top:462px;width:1319px;height:1px;background:#d4d4d4"></div><div class="b" style="left:26px;top:482px;width:1319px;height:1px;background:#d4d4d4"></div><div class="b" style="left:26px;top:502px;width:1319px;height:1px;background:#d4d4d4"></div><div class="b" style="left:26px;top:522px;width:1319px;height:1px;background:#d4d4d4"></div><div class="b" style="left:26px;top:542px;width:1319px;height:1px;background:#d4d4d4"></div><div class="b" style="left:26px;top:562px;width:1319px;height:1px;background:#d4d4d4"></div><div class="b" style="left:26px;top:582px;width:1319px;height:1px;background:#d4d4d4"></div><div class="b" style="left:26px;top:602px;width:1319px;height:1px;background:#d4d4d4"></div><div class="b" style="left:26px;top:622px;width:1319px;height:1px;background:#d4d4d4"></div><div class="b" style="left:26px;top:642px;width:1319px;height:1px;background:#d4d4d4"></div><div class="b" style="left:26px;top:662px;width:1319px;height:1px;background:#d4d4d4"></div><div class="b" style="left:26px;top:682px;width:1319px;height:1px;background:#d4d4d4"></div><div class="b" style="left:26px;top:702px;width:1319px;height:1px;background:#d4d4d4"></div>
<div class="b" style="left:0;top:242px;width:25px;height:1px;background:#4a4a4a"></div><div class="b" style="left:0;top:262px;width:25px;height:1px;background:#4a4a4a"></div><div class="b" style="left:0;top:282px;width:25px;height:1px;background:#4a4a4a"></div><div class="b" style="left:0;top:302px;width:25px;height:1px;background:#4a4a4a"></div><div class="b" style="left:0;top:322px;width:25px;height:1px;background:#4a4a4a"></div><div class="b" style="left:0;top:342px;width:25px;height:1px;background:#4a4a4a"></div><div class="b" style="left:0;top:362px;width:25px;height:1px;background:#4a4a4a"></div><div class="b" style="left:0;top:382px;width:25px;height:1px;background:#4a4a4a"></div><div class="b" style="left:0;top:402px;width:25px;height:1px;background:#4a4a4a"></div><div class="b" style="left:0;top:422px;width:25px;height:1px;background:#4a4a4a"></div><div class="b" style="left:0;top:442px;width:25px;height:1px;background:#4a4a4a"></div><div class="b" style="left:0;top:462px;width:25px;height:1px;background:#4a4a4a"></div><div class="b" style="left:0;top:482px;width:25px;height:1px;background:#4a4a4a"></div><div class="b" style="left:0;top:502px;width:25px;height:1px;background:#4a4a4a"></div><div class="b" style="left:0;top:522px;width:25px;height:1px;background:#4a4a4a"></div><div class="b" style="left:0;top:542px;width:25px;height:1px;background:#4a4a4a"></div><div class="b" style="left:0;top:562px;width:25px;height:1px;background:#4a4a4a"></div><div class="b" style="left:0;top:582px;width:25px;height:1px;background:#4a4a4a"></div><div class="b" style="left:0;top:602px;width:25px;height:1px;background:#4a4a4a"></div><div class="b" style="left:0;top:622px;width:25px;height:1px;background:#4a4a4a"></div><div class="b" style="left:0;top:642px;width:25px;height:1px;background:#4a4a4a"></div><div class="b" style="left:0;top:662px;width:25px;height:1px;background:#4a4a4a"></div><div class="b" style="left:0;top:682px;width:25px;height:1px;background:#4a4a4a"></div><div class="b" style="left:0;top:702px;width:25px;height:1px;background:#4a4a4a"></div>
<div class="b " style="left:60px;top:222px;width:1px;height:495px;background:#d4d4d4;"></div>
<div class="b " style="left:60px;top:203px;width:1px;height:19px;background:#4a4a4a;"></div>
<div class="b " style="left:235px;top:222px;width:1px;height:495px;background:#d4d4d4;"></div>
<div class="b " style="left:235px;top:203px;width:1px;height:19px;background:#4a4a4a;"></div>
<div class="b " style="left:410px;top:222px;width:1px;height:495px;background:#d4d4d4;"></div>
<div class="b " style="left:410px;top:203px;width:1px;height:19px;background:#4a4a4a;"></div>
<div class="b " style="left:585px;top:222px;width:1px;height:495px;background:#d4d4d4;"></div>
<div class="b " style="left:585px;top:203px;width:1px;height:19px;background:#4a4a4a;"></div>
<div class="b " style="left:935px;top:222px;width:1px;height:495px;background:#d4d4d4;"></div>
<div class="b " style="left:935px;top:203px;width:1px;height:19px;background:#4a4a4a;"></div>
<div class="b " style="left:1110px;top:222px;width:1px;height:495px;background:#d4d4d4;"></div>
<div class="b " style="left:1110px;top:203px;width:1px;height:19px;background:#4a4a4a;"></div>
<div class="b " style="left:1285px;top:222px;width:1px;height:495px;background:#d4d4d4;"></div>
<div class="b " style="left:1285px;top:203px;width:1px;height:19px;background:#4a4a4a;"></div>
<div class="b " style="left:25px;top:203px;width:1px;height:19px;background:#4a4a4a;"></div>
<svg class="b" style="left:10px;top:207px;" width="12" height="12" viewBox="0 0 12 12"><path d="M12 0V12H0Z" fill="#5e5e5e"/></svg>
<div class="b " style="left:586px;top:203px;width:349px;height:19px;background:#666;"></div>
<div class="b " style="left:586px;top:221px;width:349px;height:1px;background:#217346;"></div>
<div class="b " style="left:585px;top:203px;width:1px;height:19px;background:#b0b0b0;"></div>
<div class="b " style="left:935px;top:203px;width:1px;height:19px;background:#b0b0b0;"></div>
<div class="b " style="left:0px;top:222px;width:24px;height:20px;background:#666;"></div>
<div class="b " style="left:24px;top:222px;width:2px;height:20px;background:#217346;"></div>
<span class="t " style="left:39.10px;top:206.05px;font-size:13.2px;">A</span>
<span class="t " style="left:143.60px;top:206.05px;font-size:13.2px;">B</span>
<span class="t " style="left:318.43px;top:206.05px;font-size:13.2px;">C</span>
<span class="t " style="left:493.53px;top:206.05px;font-size:13.2px;">D</span>
<span class="t " style="left:756.10px;top:206.05px;font-size:13.2px;">E</span>
<span class="t " style="left:1018.97px;top:206.05px;font-size:13.2px;">F</span>
<span class="t " style="left:1193.27px;top:206.05px;font-size:13.2px;">G</span>
<span class="t " style="left:9.33px;top:226.05px;font-size:13.2px;letter-spacing:-0.600px;">1</span>
<span class="t " style="left:9.33px;top:246.05px;font-size:13.2px;letter-spacing:-0.600px;">2</span>
<span class="t " style="left:9.33px;top:266.05px;font-size:13.2px;letter-spacing:-0.600px;">3</span>
<span class="t " style="left:9.33px;top:286.05px;font-size:13.2px;letter-spacing:-0.600px;">4</span>
<span class="t " style="left:9.33px;top:306.05px;font-size:13.2px;letter-spacing:-0.600px;">5</span>
<span class="t " style="left:9.33px;top:326.05px;font-size:13.2px;letter-spacing:-0.600px;">6</span>
<span class="t " style="left:9.33px;top:346.05px;font-size:13.2px;letter-spacing:-0.600px;">7</span>
<span class="t " style="left:9.33px;top:366.05px;font-size:13.2px;letter-spacing:-0.600px;">8</span>
<span class="t " style="left:9.33px;top:386.05px;font-size:13.2px;letter-spacing:-0.600px;">9</span>
<span class="t " style="left:5.96px;top:406.05px;font-size:13.2px;letter-spacing:-0.600px;">10</span>
<span class="t " style="left:6.45px;top:426.05px;font-size:13.2px;letter-spacing:-0.600px;">11</span>
<span class="t " style="left:5.96px;top:446.05px;font-size:13.2px;letter-spacing:-0.600px;">12</span>
<span class="t " style="left:5.96px;top:466.05px;font-size:13.2px;letter-spacing:-0.600px;">13</span>
<span class="t " style="left:5.96px;top:486.05px;font-size:13.2px;letter-spacing:-0.600px;">14</span>
<span class="t " style="left:5.96px;top:506.05px;font-size:13.2px;letter-spacing:-0.600px;">15</span>
<span class="t " style="left:5.96px;top:526.05px;font-size:13.2px;letter-spacing:-0.600px;">16</span>
<span class="t " style="left:5.96px;top:546.05px;font-size:13.2px;letter-spacing:-0.600px;">17</span>
<span class="t " style="left:5.96px;top:566.05px;font-size:13.2px;letter-spacing:-0.600px;">18</span>
<span class="t " style="left:5.96px;top:586.05px;font-size:13.2px;letter-spacing:-0.600px;">19</span>
<span class="t " style="left:5.96px;top:606.05px;font-size:13.2px;letter-spacing:-0.600px;">20</span>
<span class="t " style="left:5.96px;top:626.05px;font-size:13.2px;letter-spacing:-0.600px;">21</span>
<span class="t " style="left:5.96px;top:646.05px;font-size:13.2px;letter-spacing:-0.600px;">22</span>
<span class="t " style="left:5.96px;top:666.05px;font-size:13.2px;letter-spacing:-0.600px;">23</span>
<span class="t " style="left:5.96px;top:686.05px;font-size:13.2px;letter-spacing:-0.600px;">24</span>
<span class="t " style="left:5.96px;top:706.05px;font-size:13.2px;letter-spacing:-0.600px;">25</span>
<span class="t " style="left:34.60px;top:226.05px;font-size:13.2px;letter-spacing:0.013px;color:#000;">No</span>
<span class="t " style="left:103.50px;top:226.05px;font-size:13.2px;letter-spacing:-0.044px;color:#000;">Nama Lengkap</span>
<span class="t " style="left:312.50px;top:226.05px;font-size:13.2px;letter-spacing:-0.335px;color:#000;">NIK</span>
<span class="t " style="left:447.50px;top:226.05px;font-size:13.2px;letter-spacing:0.492px;color:#000;">Nomor Sertifikat</span>
<span class="t " style="left:51.50px;top:246.05px;font-size:13.2px;letter-spacing:-0.841px;color:#000;">1</span>
<span class="t " style="left:63.30px;top:246.05px;font-size:13.2px;letter-spacing:0.203px;color:#000;">test 1</span>
<span class="t " style="left:346.00px;top:246.05px;font-size:13.2px;letter-spacing:-0.475px;color:#000;">213123123</span>
<span class="t " style="left:527.50px;top:246.05px;font-size:13.2px;letter-spacing:-0.429px;color:#000;">12312321</span>
<span class="t " style="left:51.20px;top:266.05px;font-size:13.2px;letter-spacing:-0.541px;color:#000;">2</span>
<span class="t " style="left:63.30px;top:266.05px;font-size:13.2px;letter-spacing:0.269px;color:#000;">test 2</span>
<span class="t " style="left:346.00px;top:266.05px;font-size:13.2px;letter-spacing:-0.475px;color:#000;">213123123</span>
<span class="t " style="left:527.50px;top:266.05px;font-size:13.2px;letter-spacing:-0.429px;color:#000;">12312321</span>
<svg class="b" style="left:579.5px;top:222px;" width="5.5" height="5.5" viewBox="0 0 5.5 5.5"><path d="M0 0H5.5V5.5Z" fill="#e81123"/></svg>
<div class="b " style="left:584px;top:221px;width:353px;height:23px;border:2px solid #117240;box-sizing:border-box;"></div>
<div class="b " style="left:932px;top:239px;width:7px;height:7px;background:#1c7a45;border:1px solid #fff;box-sizing:border-box;"></div>
<div class="b " style="left:26px;top:717px;width:1319px;height:1px;background:#8c8c8c;"></div>
<div class="b " style="left:1348px;top:205px;width:15px;height:15px;background:#363636;border:1px solid #555;box-sizing:border-box;"></div>
<svg class="b" style="left:1351.5px;top:210px;" width="8" height="4.5" viewBox="0 0 8 4.5"><path d="M0 4.5L4 0.2L8 4.5Z" fill="#fff"/></svg>
<div class="b " style="left:1348px;top:220px;width:15px;height:462px;background:#363636;border:1px solid #4a4a4a;box-sizing:border-box;"></div>
<div class="b " style="left:1348px;top:682px;width:15px;height:21px;background:#0a0a0a;"></div>
<div class="b " style="left:1348px;top:703px;width:15px;height:15px;background:#363636;border:1px solid #555;box-sizing:border-box;"></div>
<svg class="b" style="left:1351.5px;top:709px;" width="8" height="4.5" viewBox="0 0 8 4.5"><path d="M0 0L4 4.3L8 0Z" fill="#fff"/></svg>
<div class="b " style="left:0px;top:718px;width:1366px;height:27px;background:#262626;"></div>
<div class="b " style="left:0px;top:717px;width:26px;height:1px;background:#262626;"></div>
<div class="b " style="left:1345px;top:717px;width:21px;height:1px;background:#262626;"></div>
<div class="b " style="left:0px;top:745px;width:1366px;height:1px;background:#444;"></div>
<svg class="b" style="left:27.6px;top:726.8px;" width="5" height="8" viewBox="0 0 5 8"><path d="M4.6 0V7.4L0 3.7Z" fill="#a0a0a0"/></svg>
<svg class="b" style="left:55.7px;top:726.8px;" width="5" height="8" viewBox="0 0 5 8"><path d="M0 0V7.4L4.6 3.7Z" fill="#a0a0a0"/></svg>
<div class="b " style="left:100px;top:717px;width:122.5px;height:24px;background:#fff;"></div>
<div class="b " style="left:100px;top:740px;width:122.5px;height:2px;background:#217346;"></div>
<span class="t " style="left:112.70px;top:723.25px;font-size:13.2px;letter-spacing:-0.012px;color:#217346;font-weight:700;">Daftar Sertifikat</span>
<svg class="b" style="left:255px;top:722.5px;" width="17" height="17" viewBox="0 0 17 17"><circle cx="8.5" cy="8.5" r="7.2" fill="none" stroke="#fff" stroke-width="1.2"/><path d="M8.5 4.5V12.5M4.5 8.5H12.5" stroke="#fff" stroke-width="1.8"/></svg>
<div class="b " style="left:819px;top:726px;width:2px;height:2px;background:#fff;"></div>
<div class="b " style="left:819px;top:730px;width:2px;height:2px;background:#fff;"></div>
<div class="b " style="left:819px;top:734px;width:2px;height:2px;background:#fff;"></div>
<div class="b " style="left:851px;top:724px;width:479px;height:15px;background:#0a0a0a;"></div>
<div class="b " style="left:836px;top:724px;width:15px;height:15px;background:#363636;border:1px solid #555;box-sizing:border-box;"></div>
<svg class="b" style="left:841px;top:727px;" width="5" height="9" viewBox="0 0 5 9"><path d="M5 0V9L0.5 4.5Z" fill="#fff"/></svg>
<div class="b " style="left:851px;top:724px;width:261px;height:15px;background:#363636;border:1px solid #555;box-sizing:border-box;"></div>
<div class="b " style="left:1330px;top:724px;width:15px;height:15px;background:#363636;border:1px solid #555;box-sizing:border-box;"></div>
<svg class="b" style="left:1335px;top:727px;" width="5" height="9" viewBox="0 0 5 9"><path d="M0 0V9L4.5 4.5Z" fill="#fff"/></svg>
<div class="b " style="left:0px;top:746px;width:1366px;height:21px;background:#262626;"></div>
<div class="b " style="left:0px;top:767px;width:1366px;height:1px;background:#e8e8e8;"></div>
<span class="t " style="left:11.00px;top:749.94px;font-size:12px;letter-spacing:-0.738px;">Ready</span>
<svg class="b" style="left:62px;top:749px;" width="14" height="14" viewBox="0 0 14 14"><circle cx="2.9" cy="2.9" r="2.9" fill="#d6d6d6"/><path d="M6.4 1.5H12.6V12.5H1.5V5.2" fill="none" stroke="#e6e6e6" stroke-width="1"/><rect x="6.4" y="1" width="6.7" height="2.2" fill="#e6e6e6"/><path d="M2.8 6.6H5M5.9 6.6H8.1M9 6.6H11.2M2.8 8.6H5M5.9 8.6H8.1M9 8.6H11.2M2.8 10.5H5M5.9 10.5H8.1M9 10.5H11.2" stroke="#e6e6e6" stroke-width="1"/></svg>
<svg class="b" style="left:92px;top:748px;" width="18" height="17" viewBox="0 0 18 17"><path d="M6.6 1.6A6.2 6.2 0 0 0 6.6 14" fill="none" stroke="#f0f0f0" stroke-width="1.1" stroke-dasharray="3 1.5"/><path d="M7.5 0.8V7.6M5.4 5.6L7.5 7.8L9.6 5.6" fill="none" stroke="#f0f0f0" stroke-width="1.1"/><path d="M10 6.5H14.4M12.6 4.6L14.6 6.5L12.6 8.4" fill="none" stroke="#f0f0f0" stroke-width="1.1"/><path d="M8.4 12.2L11.6 15.4L16.8 8.4" fill="none" stroke="#fff" stroke-width="1.6"/></svg>
<span class="t " style="left:111.30px;top:749.94px;font-size:12px;letter-spacing:-0.196px;">Accessibility: Good to go</span>
<div class="b " style="left:1066px;top:746px;width:40px;height:21px;background:#4f4f4f;"></div>
<svg class="b" style="left:1078px;top:748.5px;" width="14" height="14" viewBox="0 0 14 14"><rect x="0.5" y="0.5" width="13" height="13" fill="none" stroke="#fff"/><path d="M0.5 4.83H13.5M0.5 9.17H13.5M4.83 0.5V13.5M9.17 0.5V13.5" stroke="#fff" stroke-width="1.2"/></svg>
<svg class="b" style="left:1119px;top:748.5px;" width="14" height="14" viewBox="0 0 14 14"><rect x="0.5" y="0.5" width="13" height="13" fill="none" stroke="#fff" stroke-width="1.2"/><rect x="3.5" y="3" width="7" height="8" fill="none" stroke="#fff"/><path d="M5 5H9M5 7H9M5 9H9" stroke="#fff" stroke-width="0.9"/></svg>
<svg class="b" style="left:1159px;top:749px;" width="14" height="13" viewBox="0 0 14 13"><rect x="0.5" y="0.5" width="13" height="12" fill="none" stroke="#fff" stroke-width="1.2"/><path d="M1 1H4V7H1Z M5.5 1H8.5V7H5.5Z" fill="#fff"/></svg>
<div class="b " style="left:1192px;top:755.5px;width:8px;height:1px;background:#fff;"></div>
<div class="b " style="left:1205px;top:755.5px;width:100px;height:1px;background:#fff;"></div>
<div class="b " style="left:1253px;top:750.5px;width:5px;height:12px;background:#fff;"></div>
<div class="b " style="left:1310px;top:755.5px;width:8px;height:1px;background:#fff;"></div>
<div class="b " style="left:1313.5px;top:752px;width:1px;height:8px;background:#fff;"></div>
<span class="t " style="left:1331.70px;top:749.94px;font-size:12px;letter-spacing:-1.098px;">100%</span>
</body></html>
